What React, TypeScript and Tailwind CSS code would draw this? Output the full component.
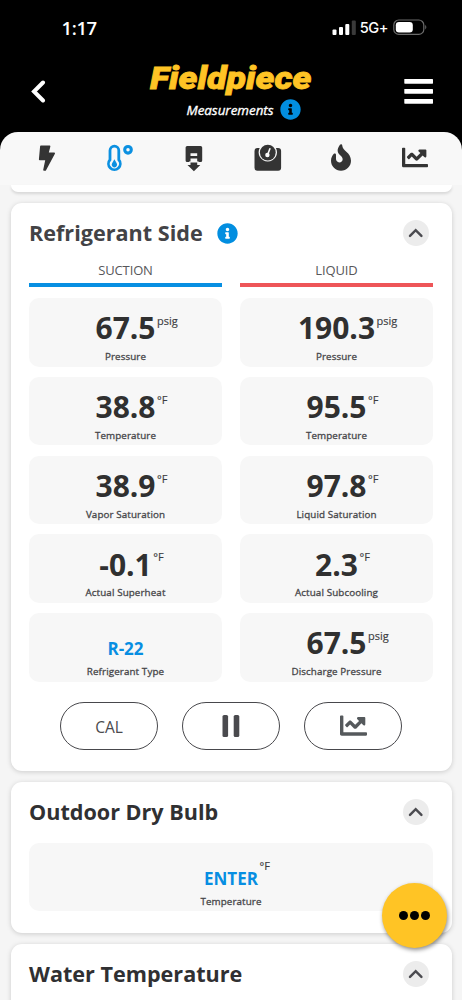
import React from "react";
import { FaFire, FaChartLine, FaInfoCircle } from "react-icons/fa";

function ChevronUp() {
  return (
    <button className="flex h-[26px] w-[26px] items-center justify-center rounded-full bg-[#ececec]" aria-label="Collapse">
      <svg className="h-[10px] w-[16px]" viewBox="0 0 16 10" fill="none" stroke="#4b4b50" strokeWidth="2.5" strokeLinecap="round" strokeLinejoin="miter">
        <path d="M2 7.8 7.7 2.2 13.4 7.8" />
      </svg>
    </button>
  );
}

type Reading = { value: string; unit?: string; label: string; action?: boolean };

function Tile({ value, unit, label, action }: Reading) {
  return (
    <div className="flex h-[68.7px] shrink-0 flex-col items-center rounded-[10px] bg-[#f7f7f7]">
      <div className="relative flex h-[52px] items-center">
        {action ? (
          <span className="mt-[20px] text-[17px] leading-5 font-bold text-[#078ee2]">{value}</span>
        ) : (
          <span className="mt-[8.6px] text-[30px] leading-[40px] font-bold text-[#303030]">{value}</span>
        )}
        {unit && (
          <span className="absolute top-[15px] left-full ml-[1.5px] text-[11px] leading-4 whitespace-nowrap text-[#3c3c3f] [-webkit-text-stroke:0.15px_#3c3c3f]">{unit}</span>
        )}
      </div>
      <span className="text-[9.8px] leading-[13px] tracking-[0.012em] whitespace-nowrap text-[#464649] [-webkit-text-stroke:0.3px_#464649]">{label}</span>
    </div>
  );
}

const suction: Reading[] = [
  { value: "67.5", unit: "psig", label: "Pressure" },
  { value: "38.8", unit: "°F", label: "Temperature" },
  { value: "38.9", unit: "°F", label: "Vapor Saturation" },
  { value: "-0.1", unit: "°F", label: "Actual Superheat" },
  { value: "R-22", label: "Refrigerant Type", action: true },
];

const liquid: Reading[] = [
  { value: "190.3", unit: "psig", label: "Pressure" },
  { value: "95.5", unit: "°F", label: "Temperature" },
  { value: "97.8", unit: "°F", label: "Liquid Saturation" },
  { value: "2.3", unit: "°F", label: "Actual Subcooling" },
  { value: "67.5", unit: "psig", label: "Discharge Pressure" },
];

function Column({ title, bar, items }: { title: string; bar: string; items: Reading[] }) {
  return (
    <div className="flex-1">
      <div className="h-[21px] text-center text-[13px] leading-[16px] tracking-[-0.01em] text-[#57575a]">{title}</div>
      <div className={"h-[4px] " + bar} />
      <div className="mt-[11px] flex flex-col gap-[10.1px]">
        {items.map((r) => (
          <Tile key={r.label} {...r} />
        ))}
      </div>
    </div>
  );
}

const cardShadow = "shadow-[0_1px_5px_rgba(0,0,0,0.17)]";

function StatusBar() {
  return (
    <div className="flex h-[55px] items-center justify-between pr-[34px] pl-[61.5px] text-white">
      <span className="font-['Open_Sans',sans-serif] text-[18.5px] leading-6 font-semibold tracking-[-0.02em]">1:17</span>
      <div className="flex items-center">
        <svg className="h-[16px] w-[25px]" viewBox="0 0 25 16">
          <rect x="0.5" y="9.5" width="4" height="5.5" rx="1" fill="#fff" />
          <rect x="7" y="7" width="4" height="8" rx="1" fill="#fff" />
          <rect x="13.3" y="4" width="4" height="11" rx="1" fill="#fff" />
          <rect x="19.8" y="0.5" width="4" height="14.5" rx="1" fill="#3a3a3a" />
        </svg>
        <span className="ml-[3px] font-['Inter',sans-serif] text-[14.6px] leading-5 font-medium tracking-[-0.03em]">5G+</span>
        <svg className="ml-[5px] h-[17px] w-[35px]" viewBox="0 0 35 17">
          <rect x="0.8" y="1" width="30" height="14.4" rx="5" fill="none" stroke="#6b6b6b" strokeWidth="1.2" />
          <rect x="2.8" y="3" width="17" height="10.4" rx="3.2" fill="#fff" />
          <path d="M32.3 5.8q2 2.4 0 4.8z" fill="#777" />
        </svg>
      </div>
    </div>
  );
}

function Header() {
  return (
    <header className="h-[132px] shrink-0 bg-black">
      <StatusBar />
      <div className="flex h-[77px] justify-between pr-[29px] pl-[31px]">
        <svg className="mt-[25px] h-[23px] w-[15px]" viewBox="0 0 15 23" fill="none" stroke="#fff" strokeWidth="4" strokeLinecap="round">
          <path d="M12 2.5 3 11.5 12 20.5" />
        </svg>
        <div className="ml-[14px] flex flex-col items-center">
          <svg className="h-[42px] w-[174px]" viewBox="0 0 174 42">
            <text x="5" y="33.7" textLength="161.5" lengthAdjust="spacingAndGlyphs" fill="#ffc425" stroke="#ffc425" strokeWidth="0.8" className="font-['Roboto',sans-serif] text-[32px] font-black italic">
              Fieldpiece
            </text>
          </svg>
          <div className="flex h-[25px] items-center gap-[6px] pl-[23px]">
            <span className="text-[13.4px] leading-5 text-white italic [-webkit-text-stroke:0.35px_white]">Measurements</span>
            <FaInfoCircle className="h-[21px] w-[21px] text-[#028ee0]" />
          </div>
        </div>
        <svg className="mt-[23px] h-[27px] w-[29px]" viewBox="0 0 29 27" fill="#fff">
          <rect x="0.3" y="1" width="28.7" height="4.7" rx="0.6" />
          <rect x="0.3" y="11" width="28.7" height="4.7" rx="0.6" />
          <rect x="0.3" y="21" width="28.7" height="4.7" rx="0.6" />
        </svg>
      </div>
    </header>
  );
}

function BoltIcon() {
  return (
    <svg className="h-[28px] w-[18px]" viewBox="0 0 18 28" fill="#343434" stroke="#343434" strokeWidth="1.6" strokeLinejoin="round">
      <path d="M2.9 2.4H11.6L9.8 9.4H16.2L7.2 26H6L8.2 15.4H1.7z" />
    </svg>
  );
}

function ThermometerIcon() {
  return (
    <svg className="h-[28px] w-[28px]" viewBox="0 0 28 28" fill="none" stroke="#0b90e1">
      <path d="M4 15.8V6.6a4.4 4.4 0 0 1 8.8 0v9.2a5.9 5.9 0 1 1-8.8 0z" strokeWidth="2.8" />
      <path d="M8.4 15.3 10.7 19.2a2.7 2.7 0 1 1-4.6 0z" fill="#0b90e1" stroke="none" />
      <circle cx="22" cy="5.8" r="3.3" strokeWidth="3.1" />
    </svg>
  );
}

function FilterIcon() {
  return (
    <svg className="h-[28px] w-[18px]" viewBox="0 0 18 28" fill="#343434">
      <path
        fillRule="evenodd"
        d="M2.2 2H15.6q1.6 0 1.6 1.6V16.4q0 1.6-1.6 1.6H2.2Q.6 18 .6 16.4V3.6Q.6 2 2.2 2zM5.5 9.2V11.9H12.2V9.2zM5.5 14.6V17.9H12.2V14.6z"
      />
      <path d="M4.2 17.4h9.4v1H4.2z" fill="#f8f8f8" />
      <path d="M5.5 18.6h6.7v2.5h3.1L8.9 27.2 2.5 21.1h3z" />
    </svg>
  );
}

function ScaleIcon() {
  return (
    <svg className="h-[28px] w-[28px]" viewBox="0 0 28 28">
      <path d="M3.5 4h2.2a9.2 9.2 0 1 0 16.2 0h2.2q3 0 3 3v16.7q0 3-3 3H3.5q-3 0-3-3V7q0-3 3-3z" fill="#343434" />
      <circle cx="13.8" cy="8.6" r="7.9" fill="#343434" />
      <path d="M15.9 4.8 14.2 9.3" stroke="#fafafa" strokeWidth="1.6" strokeLinecap="round" />
      <circle cx="13.4" cy="11" r="2.2" fill="#fafafa" />
    </svg>
  );
}

function TabBar() {
  return (
    <div className="shrink-0 bg-black">
      <div className="h-[53px] rounded-t-[18px] bg-[#f8f8f8] px-[10px]">
        <nav className="grid h-[51px] grid-cols-6 items-center justify-items-center text-[#343434]">
          <BoltIcon />
          <ThermometerIcon />
          <FilterIcon />
          <ScaleIcon />
          <FaFire className="h-[27px] w-[20px]" />
          <FaChartLine className="mr-[1px] h-[27px] w-[26px]" />
        </nav>
      </div>
    </div>
  );
}

function CardTitle({ children, info }: { children: React.ReactNode; info?: boolean }) {
  return (
    <div className="flex h-[60px] items-center justify-between pr-[4.5px]">
      <div className="flex items-center gap-[14px]">
        <h2 className={"text-[21.6px] leading-7 font-bold " + (info ? "text-[#434346]" : "text-[#303032]")}>{children}</h2>
        {info && <FaInfoCircle className="h-[21px] w-[21px] text-[#028ee0]" />}
      </div>
      <ChevronUp />
    </div>
  );
}

const pill = "flex h-[48px] w-[98px] items-center justify-center rounded-[24px] border-[1.5px] border-[#48484c] text-[#4a4a4e]";

export default function App() {
  return (
    <div className="relative flex h-[1000px] w-[462px] flex-col overflow-hidden bg-[#f5f5f5] font-['Open_Sans','Noto_Sans',sans-serif]">
      <Header />
      <TabBar />
      <div className="mx-[10.5px] h-[7px] shrink-0 rounded-b-[11px] bg-white shadow-[0_2px_3px_rgba(0,0,0,0.12)]" />
      <main className="mx-[10.5px] mt-[11px] flex flex-col gap-[11px]">
        <section className={"h-[567.5px] shrink-0 rounded-[11px] bg-white px-[18.5px] " + cardShadow}>
          <CardTitle info>Refrigerant Side</CardTitle>
          <div className="-mt-[1px] flex gap-[18px]">
            <Column title="SUCTION" bar="bg-[#078fe2]" items={suction} />
            <Column title="LIQUID" bar="bg-[#ee5558]" items={liquid} />
          </div>
          <div className="mt-[20px] flex justify-center gap-[24px]">
            <button className={pill + " pt-[3px] text-[15.5px]"}>CAL</button>
            <button className={pill} aria-label="Pause">
              <svg className="h-[22px] w-[18px]" viewBox="0 0 18 22" fill="#4a4a4e">
                <rect x="0.5" width="5.6" height="22" rx="1.6" />
                <rect x="11.7" width="5.6" height="22" rx="1.6" />
              </svg>
            </button>
            <button className={pill} aria-label="Chart">
              <FaChartLine className="h-[27px] w-[27px] text-[#55595c]" />
            </button>
          </div>
        </section>
        <section className={"h-[151px] shrink-0 rounded-[11px] bg-white px-[18.5px] " + cardShadow}>
          <CardTitle>Outdoor Dry Bulb</CardTitle>
          <div className="mt-[1px]">
            <Tile value="ENTER" unit="°F" label="Temperature" action />
          </div>
        </section>
        <section className={"h-[151px] shrink-0 rounded-[11px] bg-white px-[18.5px] " + cardShadow}>
          <CardTitle>Water Temperature</CardTitle>
        </section>
      </main>
      <button className="absolute top-[883px] left-[382px] flex h-[65px] w-[65px] items-center justify-center gap-[2px] rounded-full bg-[#ffc425] shadow-[1px_2px_4px_rgba(0,0,0,0.45)]" aria-label="More">
        <span className="h-[9px] w-[9px] rounded-full bg-black" />
        <span className="h-[9px] w-[9px] rounded-full bg-black" />
        <span className="h-[9px] w-[9px] rounded-full bg-black" />
      </button>
    </div>
  );
}
